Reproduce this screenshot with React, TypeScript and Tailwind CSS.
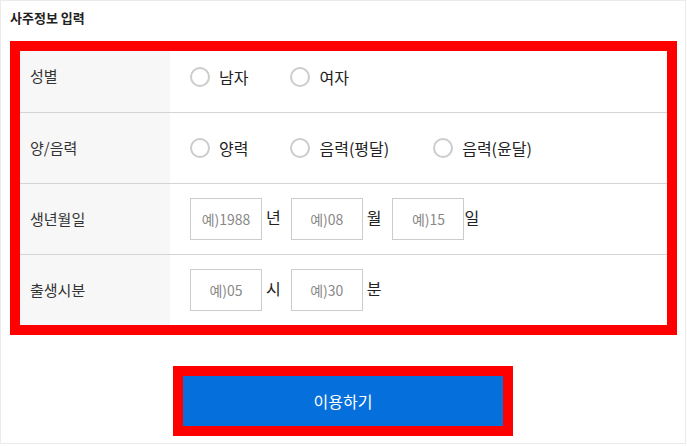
import React from 'react';

const font = { fontFamily: '"Noto Sans CJK KR", "Noto Sans", sans-serif' };

const Radio = ({ label, className = '' }: { label: string; className?: string }) => (
  <label className={`flex items-center ${className}`}>
    <span className="w-[20px] h-[20px] rounded-full border-2 border-[#cccccc] bg-white" />
    <span className="ml-[9px] text-[16px] text-[#222]">{label}</span>
  </label>
);

const DateInput = ({ placeholder }: { placeholder: string }) => (
  <input
    type="text"
    placeholder={placeholder}
    className="w-[72px] h-[42px] border border-[#cccccc] bg-white text-center text-[14px] text-[#333] placeholder:text-[#888] outline-none"
  />
);

const Suffix = ({ text, className = '' }: { text: string; className?: string }) => (
  <span className={`text-[16px] text-[#222] mb-[5px] ${className}`}>{text}</span>
);

const Row = ({
  label,
  children,
  first,
  last,
}: {
  label: string;
  children: React.ReactNode;
  first?: boolean;
  last?: boolean;
}) => (
  <div
    className={`flex ${first ? 'h-[62px]' : last ? 'h-[70px]' : 'h-[71px]'} ${last ? '' : 'border-b border-[#d4d4d4]'}`}
  >
    <div className={`w-[150px] bg-[#f7f7f7] pl-[10px] flex items-center text-[15px] text-[#333] ${first ? 'pb-[10px]' : ''}`}>
      {label}
    </div>
    <div className={`flex-1 pl-[20px] flex items-center ${first ? 'pb-[10px]' : ''}`}>{children}</div>
  </div>
);

const App = () => {
  return (
    <div style={font} className="w-[686px] h-[444px] border border-[#ebebeb] bg-white">
      <div className="pl-[9px]">
        <h2 className="pt-[8px] text-[13px] leading-[18px] font-bold text-[#222]">사주정보 입력</h2>
        <div className="mt-[14px] w-[667px] border-[10px] border-[#ff0000] bg-white">
          <Row label="성별" first>
            <Radio label="남자" className="mr-[42px]" />
            <Radio label="여자" />
          </Row>
          <Row label="양/음력">
            <Radio label="양력" className="mr-[42px]" />
            <Radio label="음력(평달)" className="mr-[44px]" />
            <Radio label="음력(윤달)" />
          </Row>
          <Row label="생년월일">
            <DateInput placeholder="예)1988" />
            <Suffix text="년" className="ml-[4px] mr-[10px]" />
            <DateInput placeholder="예)08" />
            <Suffix text="월" className="ml-[4px] mr-[11px]" />
            <DateInput placeholder="예)15" />
            <Suffix text="일" />
          </Row>
          <Row label="출생시분" last>
            <DateInput placeholder="예)05" />
            <Suffix text="시" className="ml-[4px] mr-[10px]" />
            <DateInput placeholder="예)30" />
            <Suffix text="분" className="ml-[4px]" />
          </Row>
        </div>
      </div>
      <div className="mt-[31px] flex justify-center">
        <button className="w-[340px] h-[70px] border-[10px] border-[#ff0000] bg-[#0570db] text-white text-[16px]">
          이용하기
        </button>
      </div>
    </div>
  );
};

export default App;
